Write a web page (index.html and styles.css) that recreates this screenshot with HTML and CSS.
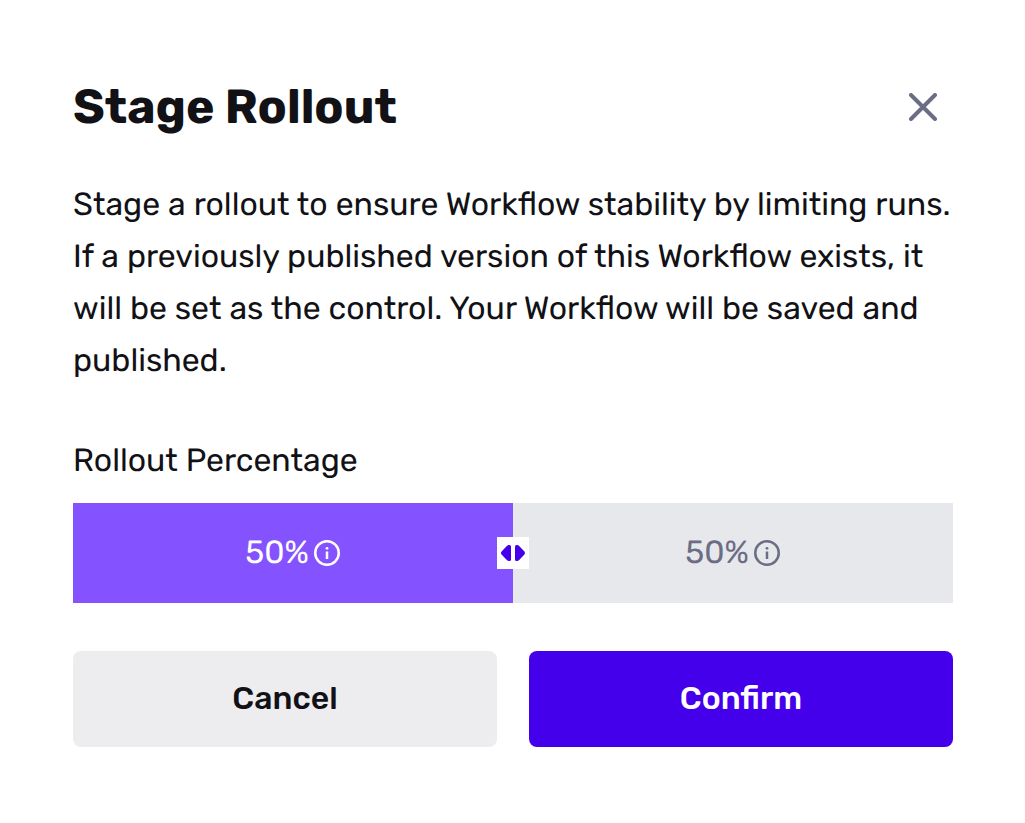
FILE: index.html
```html
<!DOCTYPE html>
<html lang="en">
<head>
<meta charset="utf-8">
<title>Stage Rollout</title>
<link rel="stylesheet" href="styles.css">
</head>
<body>
<main class="dialog">
  <header class="header">
    <h1 class="title">Stage Rollout</h1>
    <button class="close" aria-label="Close">
      <svg width="28" height="28" viewBox="0 0 28 28" fill="none" stroke="currentColor" stroke-width="4" stroke-linecap="round"><path d="M2 2 26 26M26 2 2 26"/></svg>
    </button>
  </header>
  <p class="description">Stage a rollout to ensure Workflow stability by limiting runs. If a previously published version of this Workflow exists, it will be set as the control. Your Workflow will be saved and published.</p>
  <div class="label">Rollout Percentage</div>
  <div class="slider">
    <div class="segment segment-new">
      <span class="percent">50%</span>
      <svg class="info" width="26" height="26" viewBox="0 0 26 26" fill="none" stroke="currentColor" stroke-width="2.5"><circle cx="13" cy="13" r="11.75"/><path d="M13 11.5V19"/><circle cx="13" cy="8.3" r="1.4" fill="currentColor" stroke="none"/></svg>
    </div>
    <div class="segment segment-control">
      <span class="percent">50%</span>
      <svg class="info" width="26" height="26" viewBox="0 0 26 26" fill="none" stroke="currentColor" stroke-width="2.5"><circle cx="13" cy="13" r="11.75"/><path d="M13 11.5V19"/><circle cx="13" cy="8.3" r="1.4" fill="currentColor" stroke="none"/></svg>
    </div>
    <div class="handle">
      <svg width="32" height="32" viewBox="0 0 32 32" fill="currentColor"><path d="M14 9.500V22.500Q14 24 12.500 24H11.800Q10.800 24 9.800 23L4.600 17.500Q3.400 16 4.600 14.500L9.800 9Q10.800 8 11.800 8H12.500Q14 8 14 9.500Z"/><path d="M18 9.500V22.500Q18 24 19.500 24H20.200Q21.200 24 22.200 23L27.400 17.500Q28.600 16 27.400 14.500L22.200 9Q21.200 8 20.200 8H19.500Q18 8 18 9.500Z"/></svg>
    </div>
  </div>
  <footer class="actions">
    <button class="button cancel">Cancel</button>
    <button class="button confirm">Confirm</button>
  </footer>
</main>
</body>
</html>
```
FILE: styles.css
```css
* { box-sizing: border-box; }
body {
  margin: 0;
  background: #fff;
  color: #111116;
  font-family: Rubik, Roboto, sans-serif;
  font-size: 32px;
  text-rendering: geometricPrecision;
}
button { border: 0; padding: 0; font: inherit; }
.dialog {
  display: flex;
  flex-direction: column;
  width: 1025px;
  height: 823px;
  padding: 75px 72px 76px 73px;
}
.header {
  display: flex;
  align-items: center;
  justify-content: space-between;
  height: 64px;
  padding-right: 16px;
}
.title {
  margin: 0;
  font-size: 48px;
  font-weight: 700;
  line-height: 64px;
  white-space: nowrap;
}
.close { display: flex; background: none; color: #6b6d85; }
.description { margin: 39px 0 0; line-height: 52px; word-spacing: 0.1px; }
.label { margin-top: 48px; height: 69px; line-height: 52px; white-space: nowrap; }
.slider {
  position: relative;
  display: grid;
  grid-template-columns: 1fr 1fr;
  height: 100px;
}
.segment { display: flex; align-items: center; justify-content: center; gap: 5px; }
.segment-new { background: #8552ff; color: #fff; }
.segment-control { background: #e7e8ec; color: #6b6d85; }
.percent { padding-bottom: 2px; margin-left: -1px; }
.info { display: block; }
.handle {
  position: absolute;
  left: 424px;
  top: 34px;
  width: 32px;
  height: 32px;
  background: #fff;
  color: #4400eb;
}
.handle svg { display: block; }
.actions {
  display: grid;
  grid-template-columns: 1fr 1fr;
  gap: 32px;
  height: 96px;
  margin-top: 48px;
}
.button { padding-bottom: 2px; border-radius: 8px; font-weight: 500; line-height: 52px; }
.cancel { background: #ededef; color: #111116; }
.confirm { background: #4400eb; color: #fff; }
```
